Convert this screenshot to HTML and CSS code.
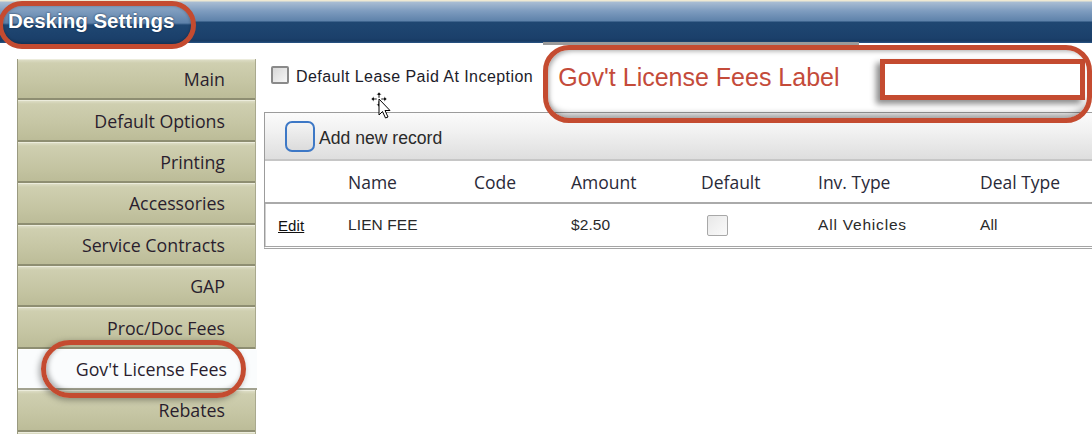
FILE: index.html
```html
<!DOCTYPE html>
<html>
<head>
<meta charset="utf-8">
<link rel="stylesheet" href="styles.css">
</head>
<body>
<div class="page">
  <header class="header">
    <h1 class="title">Desking Settings</h1>
  </header>
  <div class="oval oval-title"></div>

  <div class="main">
    <nav class="sidebar">
      <div class="tab">Main</div>
      <div class="tab">Default Options</div>
      <div class="tab">Printing</div>
      <div class="tab">Accessories</div>
      <div class="tab">Service Contracts</div>
      <div class="tab">GAP</div>
      <div class="tab">Proc/Doc Fees</div>
      <div class="tab tab-active">Gov't License Fees</div>
      <div class="tab">Rebates</div>
      <div class="tab"></div>
    </nav>
    <div class="oval oval-tab"></div>

    <section class="content">
      <div class="toprow">
        <label class="lease"><span class="cb"></span><span class="lease-text">Default Lease Paid At Inception</span></label>
        <div class="fees-label">Gov't License Fees Label</div>
        <div class="fees-input"></div>
      </div>
      <div class="panel-tab"></div>
      <div class="oval oval-panel"></div>

      <div class="grid">
        <div class="toolbar"><span class="addicon"></span><span class="add-text">Add new record</span></div>
        <div class="row head">
          <span></span><span>Name</span><span>Code</span><span>Amount</span><span>Default</span><span>Inv. Type</span><span>Deal Type</span>
        </div>
        <div class="row data">
          <span class="edit">Edit</span><span>LIEN FEE</span><span></span><span>$2.50</span><span><span class="cb cb-dis"></span></span><span class="wide">All Vehicles</span><span>All</span>
        </div>
      </div>
    </section>
  </div>

  <svg class="cursor" width="26" height="32" viewBox="0 0 26 32">
    <g fill="#000" stroke="#fff" stroke-width="0.6">
      <path d="M9 1 L11.5 4 L9.8 4 L9.8 7 L8.2 7 L8.2 4 L6.5 4 Z"/>
      <path d="M1 8 L4 5.5 L4 7.2 L7 7.2 L7 8.8 L4 8.8 L4 10.5 Z"/>
      <path d="M9 16 L6.5 13 L8.2 13 L8.2 10 L9.8 10 L9.8 13 L11.5 13 Z"/>
      <path d="M17 8 L14 10.5 L14 8.8 L11 8.8 L11 7.2 L14 7.2 L14 5.5 Z"/>
    </g>
    <path d="M9 8 L9 24 L12.5 20.5 L15.5 27 L18 26 L15 19.5 L20 19.5 Z" fill="#fff" stroke="#000" stroke-width="1"/>
  </svg>
</div>
</body>
</html>
```

FILE: styles.css
```css
* { box-sizing: border-box; }
html, body { margin: 0; padding: 0; background: #fff; }
.page {
  position: relative;
  width: 1092px;
  height: 434px;
  overflow: hidden;
  font-family: "Liberation Sans", Arial, sans-serif;
}

.header {
  height: 43px;
  background: linear-gradient(to bottom,
    #efe9d2 0, #efe9d2 1px,
    #a9bdd3 2px, #7e9cbf 11px, #5e82aa 21px,
    #1f4772 22px, #1b406b 38px, #173a63 41px, #2a5687 43px);
  display: flex;
  align-items: center;
}
.title {
  position: relative;
  z-index: 2;
  margin: 0 0 2px 8px;
  font-family: "Liberation Sans", Arial, sans-serif;
  font-weight: bold;
  font-size: 20.5px;
  color: #fff;
  text-shadow: 0 0 2px #0c2340;
}

.oval {
  position: absolute;
  border: 5px solid #c44b30;
  pointer-events: none;
}
.oval-title {
  left: -2px; top: 1px;
  width: 198px; height: 48px;
  border-radius: 24px;
  background: linear-gradient(to bottom,
    #8aa6c6 0, #5e82aa 17px, #1f4772 19px, #1b406b 32px, #143559 42px);
  box-shadow: inset 0 0 3px rgba(0,0,0,0.3);
}
.oval-tab {
  left: 41px; top: 340px;
  width: 205px; height: 58px;
  border-radius: 29px;
  box-shadow: -2px 2px 6px rgba(0,0,0,0.35), inset 2px -2px 5px rgba(0,0,0,0.3);
}
.panel-tab {
  position: absolute;
  left: 543px; top: 42px;
  width: 316px; height: 3px;
  background: #9a9a9a;
}
.oval-panel {
  left: 543px; top: 45px;
  width: 549px; height: 78px;
  border-radius: 26px;
  box-shadow: inset 3px 3px 5px -2px rgba(0,0,0,0.35), inset 0 -10px 6px -6px rgba(0,0,0,0.35);
}

.main {
  display: flex;
  padding-left: 17px;
}

.sidebar {
  width: 239px;
  margin-top: 16px;
  flex: none;
  border-left: 1px solid #9a9a80;
  border-right: 1px solid #a9a98e;
}
.tab {
  height: 41.4px;
  display: flex;
  align-items: center;
  justify-content: flex-end;
  padding-right: 30px;
  font-family: "Open Sans", "Noto Sans", sans-serif;
  font-size: 17.8px;
  color: #2a1e2e;
  background: linear-gradient(to bottom, #dcdcc4 0, #cfcfb0 3px, #c5c5a3 60%, #bcbc98 100%);
  border-top: 1px solid #ececdc;
  border-bottom: 2px solid #8e8e72;
}
.tab-active {
  background: #fafcfd;
  border-top: 1px solid #fff;
  border-bottom: 2px solid #a2a290;
  margin-right: -2px;
}

.content {
  flex: 1;
  min-width: 0;
  padding-left: 8px;
}

.toprow {
  height: 69px;
  display: flex;
  align-items: center;
  padding-left: 7px;
}
.lease {
  display: flex;
  align-items: center;
  font-size: 16px;
  letter-spacing: 0.45px;
  color: #1c1c2a;
  margin-top: -6px;
}
.lease-text { padding-top: 5px; }
.cb {
  display: inline-block;
  width: 18px;
  height: 18px;
  border: 2px solid #8a8a8a;
  background: linear-gradient(135deg, #d8d8d8, #f6f6f6);
  margin-right: 7px;
  border-radius: 2px;
}
.cb-dis {
  width: 21px; height: 21px;
  border: 1px solid #a8a8a8;
  background: linear-gradient(135deg, #e8e8e8, #fafafa);
}
.fees-label {
  margin-left: 25px;
  margin-top: 0;
  font-size: 25px;
  color: #c44b3a;
}
.fees-input {
  margin-left: 40px;
  margin-top: 4px;
  width: 205px;
  height: 41px;
  border: 5px solid #c44b30;
  background: #fff;
  box-shadow: -4px 4px 6px rgba(0,0,0,0.45);
}

.grid {
  width: 840px;
  border: 1px solid #9c9c9c;
  border-right: none;
  border-bottom: 3px double #a5a5a5;
  box-shadow: inset 1px 0 0 #d0d0d0;
}
.toolbar {
  height: 48px;
  display: flex;
  align-items: center;
  padding-left: 20px;
  font-size: 17.6px;
  color: #2a2a2a;
  background: linear-gradient(to bottom, #fbfbfb 0, #f1f1f1 40%, #dedede 100%);
  border-bottom: 2px solid #c6c6c6;
}
.add-text { padding-top: 4px; }
.addicon {
  width: 30px;
  height: 31px;
  border: 2px solid #3d78c6;
  border-radius: 7px;
  margin-right: 4px;
  background: linear-gradient(to bottom, #f4f4f4, #dcdcdc);
}
.row {
  display: grid;
  grid-template-columns: 70px 126px 97px 130px 117px 162px 1fr;
  align-items: center;
}
.row > span { padding-left: 13px; }
.head {
  height: 43px;
  font-family: "Open Sans", "Noto Sans", sans-serif;
  font-size: 17.5px;
  color: #2a2a38;
  background: #fff;
  border-bottom: 2px solid #aaaaaa;
}
.data {
  height: 42px;
  font-size: 15.5px;
  color: #2a2a2a;
  letter-spacing: 0.1px;
}
.data .wide { letter-spacing: 0.8px; }
.edit {
  text-decoration: underline;
  font-size: 15px;
  color: #111;
}
.data .cb-dis { margin-left: 6px; vertical-align: middle; margin-right: 0; }

.cursor {
  position: absolute;
  left: 370px;
  top: 91px;
}
```
